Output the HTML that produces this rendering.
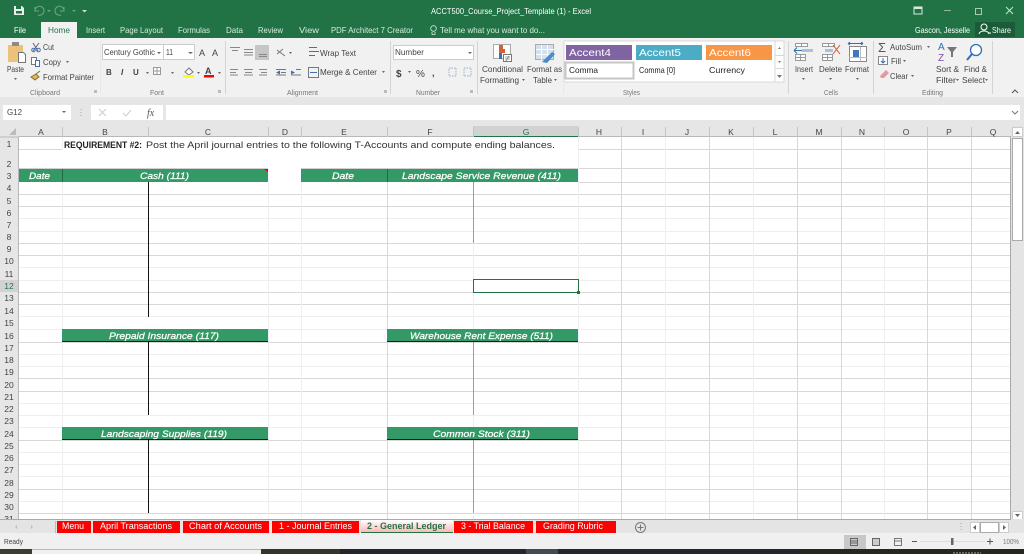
<!DOCTYPE html>
<html><head><meta charset="utf-8"><style>
html,body{margin:0;padding:0;background:#fff;width:1024px;height:554px;overflow:hidden}
svg{display:block;filter:blur(.35px)}
text{font-family:"Liberation Sans",sans-serif;font-size:8.5px;fill:#444}
.g{fill:#777;font-size:7.5px}
.w{fill:#fff}
.lt{fill:#d8eadf}
.h{fill:#fff;font-style:italic;font-size:9.5px;stroke:#fff;stroke-width:.25px}
.r{fill:#444;font-size:8.5px;text-anchor:middle}
.c{fill:#444;font-size:8.5px;text-anchor:middle}
.tab{fill:#fff;font-size:9px}
</style></head><body>
<svg width="1024" height="554" viewBox="0 0 1024 554" xmlns="http://www.w3.org/2000/svg">
<defs><linearGradient id="gl" x1="0" y1="0" x2="0" y2="1"><stop offset="0" stop-color="#fff"/><stop offset="1" stop-color="#ffb0b0"/></linearGradient></defs>
<!-- title / tabs -->
<rect width="1024" height="38" fill="#217346"/>
<path d="M14 6h8l2 2v7h-10z" fill="#e8f0ea"/><rect x="16" y="6" width="5" height="3" fill="#217346"/><rect x="16" y="11" width="6" height="2.500" fill="#217346"/>
<path d="M35 7v4h4M35 11a4.500 4.500 0 1 1 3 4" stroke="#6fa487" fill="none"/>
<path d="M64 7v4h-4M64 11a4.500 4.500 0 1 0-3 4" stroke="#6fa487" fill="none"/>
<path d="M47 10l2 2 2-2zM72 10l2 2 2-2z" fill="#6fa487"/>
<path d="M82 10h5l-2.500 2.500z" fill="#cfe0d6"/>
<text class="w" x="431" y="14" textLength="160" lengthAdjust="spacingAndGlyphs">ACCT500_Course_Project_Template (1) - Excel</text>
<rect x="41" y="22" width="36" height="17" fill="#f1f1f1"/>
<text class="w" x="14" y="33" textLength="12" lengthAdjust="spacingAndGlyphs">File</text>
<text x="48" y="33" textLength="22" lengthAdjust="spacingAndGlyphs" style="fill:#217346">Home</text>
<text class="lt" x="86" y="33" textLength="19" lengthAdjust="spacingAndGlyphs">Insert</text>
<text class="lt" x="120" y="33" textLength="43" lengthAdjust="spacingAndGlyphs">Page Layout</text>
<text class="lt" x="178" y="33" textLength="32" lengthAdjust="spacingAndGlyphs">Formulas</text>
<text class="lt" x="226" y="33" textLength="17" lengthAdjust="spacingAndGlyphs">Data</text>
<text class="lt" x="258" y="33" textLength="25" lengthAdjust="spacingAndGlyphs">Review</text>
<text class="lt" x="299" y="33" textLength="20" lengthAdjust="spacingAndGlyphs">View</text>
<text class="lt" x="331" y="33" textLength="82" lengthAdjust="spacingAndGlyphs">PDF Architect 7 Creator</text>
<circle cx="433.500" cy="28.500" r="2.800" stroke="#d8eadf" fill="none" stroke-width=".8"/><path d="M432 32v2.500h3V32" stroke="#d8eadf" fill="none" stroke-width=".8"/>
<text class="lt" x="440" y="33" textLength="105" lengthAdjust="spacingAndGlyphs">Tell me what you want to do...</text>
<text class="w" x="915" y="33" textLength="55" lengthAdjust="spacingAndGlyphs">Gascon, Jesselle</text>
<rect x="975" y="22" width="40" height="15" fill="#1a5c38"/>
<circle cx="984" cy="27" r="3" stroke="#fff" fill="none"/><path d="M979 34c1-4 9-4 10 0M988 33h3" stroke="#fff" fill="none"/>
<text class="w" x="992" y="33" textLength="19" lengthAdjust="spacingAndGlyphs">Share</text>
<rect x="914" y="7" width="8" height="7" stroke="#dbe8df" fill="none"/><rect x="914" y="7" width="8" height="2" fill="#dbe8df"/>
<path d="M944 10.500h7" stroke="#8fb7a0"/>
<rect x="975.500" y="8.500" width="6" height="6" stroke="#a9c8b5" fill="none"/>
<path d="M1006 7l7 7M1013 7l-7 7" stroke="#cfe0d6"/>
<!-- ribbon -->
<rect y="38" width="1024" height="59" fill="#f1f1f1"/>
<rect y="97" width="1024" height="29" fill="#e6e6e6"/>
<path d="M225.500 41v53M390.500 41v53M477.500 41v53M788.500 41v53M873.500 41v53M992.500 41v53" stroke="#d4d4d4"/>
<path d="M100.500 41v53M563.500 84v10" stroke="#e8e8e8"/>
<!-- clipboard -->
<rect x="8" y="45" width="15" height="17" fill="#ecc27a"/><rect x="12" y="42" width="7" height="4" fill="#8a8a8a"/>
<path d="M18.500 52.500h5l2 2v8h-7z" fill="#fff" stroke="#777"/>
<text x="7" y="72" textLength="17" lengthAdjust="spacingAndGlyphs">Paste</text>
<path d="M14 78h3l-1.500 2z" fill="#666"/>
<path d="M33 43l5 8M39 43l-6 8" stroke="#667" /><circle cx="33.500" cy="50" r="1.800" stroke="#3f6fb5" fill="none"/><circle cx="38.500" cy="50" r="1.800" stroke="#3f6fb5" fill="none"/>
<text x="43" y="50" textLength="11" lengthAdjust="spacingAndGlyphs">Cut</text>
<rect x="31.500" y="57.500" width="5" height="7" fill="#fff" stroke="#777"/><rect x="35.500" y="60.500" width="4" height="6" fill="#fff" stroke="#3f6fb5"/>
<text x="43" y="65" textLength="18" lengthAdjust="spacingAndGlyphs">Copy</text><path d="M66 61h3l-1.500 2z" fill="#666"/>
<path d="M31 77l5-3 3 3-4 3zM36 74l4-3" stroke="#8a6d2b" fill="#e3b560"/>
<text x="43" y="80" textLength="51" lengthAdjust="spacingAndGlyphs">Format Painter</text>
<text class="g" x="30" y="95" textLength="30" lengthAdjust="spacingAndGlyphs">Clipboard</text>
<rect x="94" y="90" width="3" height="3" fill="#bbb"/>
<!-- font -->
<rect x="102.500" y="44.500" width="61" height="15" fill="#fff" stroke="#ccc"/><rect x="163.500" y="44.500" width="31" height="15" fill="#fff" stroke="#ccc"/>
<text x="104" y="55" textLength="51" lengthAdjust="spacingAndGlyphs">Century Gothic</text><path d="M157 52h4l-2 2z" fill="#666"/>
<text x="166" y="55" textLength="7" lengthAdjust="spacingAndGlyphs">11</text><path d="M188 52h5l-2.500 2z" fill="#666"/>
<text x="199" y="56" style="font-size:9px">A</text><text x="212" y="56" style="font-size:9px">A</text>
<text x="106" y="75" style="font-weight:bold;font-size:8px">B</text><text x="121" y="75" style="font-style:italic;font-weight:bold;font-size:8px">I</text><text x="133" y="75" style="font-weight:bold;font-size:8px">U</text>
<path d="M146 72h3l-1.500 2z" fill="#666"/>
<path d="M153.500 67.500h7v7h-7zM157 67.500v7M153.500 71h7" stroke="#999" fill="#fff"/>
<path d="M171 72h3l-1.500 2z" fill="#666"/>
<path d="M185 72l4-4 4 4-4 3z" fill="#fff" stroke="#777"/><rect x="183" y="75" width="11" height="2.500" fill="#ff0"/>
<path d="M197 72h3l-1.500 2z" fill="#666"/>
<text x="205" y="74" style="font-size:9px;font-weight:bold">A</text><rect x="204" y="75" width="10" height="2.500" fill="#f00"/>
<path d="M218 72h3l-1.500 2z" fill="#666"/>
<text class="g" x="150" y="95" textLength="14" lengthAdjust="spacingAndGlyphs">Font</text>
<rect x="218" y="90" width="3" height="3" fill="#bbb"/>
<!-- alignment -->
<rect x="255" y="45" width="14" height="15" fill="#c6c6c6"/>
<path d="M230 47.500h10M232 50.500h6M244 49.500h9M244 52.500h9M244 55h9M259 54.500h8M259 56.500h8" stroke="#888"/>
<path d="M230 69.500h8M230 72.500h6M230 75h8M244 69.500h9M245 72.500h7M244 75h9M259 69.500h8M261 72.500h6M259 75h8" stroke="#888"/>
<path d="M277 50l8 6M277 54l6-5" stroke="#777" fill="none"/><path d="M289 52h3l-1.500 2z" fill="#666"/>
<path d="M276 69.500h10M276 75h10M281 72.500h5M296 69.500h5M291 75h10" stroke="#777"/><path d="M276 72.500l4-2v4zM295 72.500l-4-2v4z" fill="#3f6fb5"/>
<path d="M309 47.500h8M309 51.500h10M309 55.500h6" stroke="#3f6fb5"/>
<rect x="308.500" y="67.500" width="10" height="10" fill="none" stroke="#777"/><path d="M310 72.500h7" stroke="#3f6fb5"/>
<text x="320" y="56" textLength="36" lengthAdjust="spacingAndGlyphs">Wrap Text</text>
<text x="320" y="75" textLength="57" lengthAdjust="spacingAndGlyphs">Merge &amp; Center</text><path d="M382 71h3l-1.500 2z" fill="#666"/>
<text class="g" x="287" y="95" textLength="31" lengthAdjust="spacingAndGlyphs">Alignment</text>
<rect x="384" y="90" width="3" height="3" fill="#bbb"/>
<!-- number -->
<rect x="393.500" y="45.500" width="80" height="14" fill="#fff" stroke="#ccc"/>
<text x="395" y="55" textLength="29" lengthAdjust="spacingAndGlyphs">Number</text><path d="M468 52h4l-2 2z" fill="#666"/>
<text x="396" y="77" style="font-size:10px;font-weight:bold" fill="#444">$</text><path d="M408 71h3l-1.500 2z" fill="#666"/>
<text x="416" y="77" style="font-size:10px">%</text><text x="432" y="76" style="font-size:9px;font-weight:bold">,</text>
<path d="M449 68h7v8h-7z" fill="none" stroke="#9db0c5" stroke-dasharray="1.500 1"/><path d="M464 68h7v8h-7z" fill="none" stroke="#9db0c5" stroke-dasharray="1.500 1"/>
<text class="g" x="416" y="95" textLength="24" lengthAdjust="spacingAndGlyphs">Number</text>
<rect x="470" y="90" width="3" height="3" fill="#bbb"/>
<!-- cond format -->
<rect x="493.500" y="44.500" width="17" height="14" fill="#fff" stroke="#aaa"/>
<rect x="499" y="45" width="4" height="4" fill="#d2603a"/><rect x="499" y="49" width="6" height="4" fill="#d2603a"/><rect x="499" y="53" width="3" height="6" fill="#3f6fb5"/>
<rect x="503.500" y="54.500" width="8" height="7" fill="#fff" stroke="#777"/><path d="M505 57h5M505 59h5M509 56l-3 5" stroke="#555" stroke-width=".6"/>
<text x="482" y="72" textLength="41" lengthAdjust="spacingAndGlyphs">Conditional</text>
<text x="480" y="83" textLength="39" lengthAdjust="spacingAndGlyphs">Formatting</text><path d="M522 79h3l-1.500 2z" fill="#666"/>
<rect x="535.500" y="44.500" width="18" height="15" fill="#d3e0ef" stroke="#aaa"/><path d="M541.500 45v15M547.500 45v15M536 49.500h18M536 54.500h18" stroke="#fff"/>
<path d="M542 62l10-10 3 2-8 9z" fill="#4e8ac8"/>
<text x="527" y="72" textLength="35" lengthAdjust="spacingAndGlyphs">Format as</text>
<text x="533" y="83" textLength="19" lengthAdjust="spacingAndGlyphs">Table</text><path d="M554 79h3l-1.500 2z" fill="#666"/>
<!-- styles -->
<rect x="564" y="41" width="211" height="41" fill="#fff" stroke="#d8d8d8"/>
<rect x="566" y="45" width="66" height="15" fill="#8064a2"/>
<rect x="636" y="45" width="66" height="15" fill="#4bacc6"/>
<rect x="706" y="45" width="66" height="15" fill="#f79646"/>
<rect x="565.500" y="62.500" width="68" height="16" fill="#fff" stroke="#c6c6c6" stroke-width="2"/>
<text class="w" x="569" y="56" textLength="42" lengthAdjust="spacingAndGlyphs" style="font-size:10px">Accent4</text>
<text class="w" x="639" y="56" textLength="42" lengthAdjust="spacingAndGlyphs" style="font-size:10px">Accent5</text>
<text class="w" x="709" y="56" textLength="42" lengthAdjust="spacingAndGlyphs" style="font-size:10px">Accent6</text>
<text x="569" y="73" textLength="29" lengthAdjust="spacingAndGlyphs" style="fill:#222">Comma</text>
<text x="639" y="73" textLength="36" lengthAdjust="spacingAndGlyphs" style="fill:#222">Comma [0]</text>
<text x="709" y="73" textLength="36" lengthAdjust="spacingAndGlyphs" style="fill:#222">Currency</text>
<rect x="775" y="41" width="9" height="41" fill="#fff" stroke="#d8d8d8"/><path d="M775 55.500h9M775 68.500h9" stroke="#d8d8d8"/>
<path d="M778 49h3l-1.500-2zM778 61h3l-1.500 2zM777 75h5l-2.500 3z" fill="#777"/>
<text class="g" x="623" y="95" textLength="17" lengthAdjust="spacingAndGlyphs">Styles</text>
<!-- cells -->
<path d="M795.500 43.500h12v3h-12zM801.500 43.500v3M795.500 54.500h10v6h-10zM800.500 54.500v6M795.500 57.500h10" stroke="#999" fill="#fff"/>
<rect x="802" y="49" width="11" height="3" fill="#a9c2dc"/><path d="M794 50.500h8M794 50.500l3-3M794 50.500l3 3" stroke="#2f6fb8" fill="none"/>
<text x="795" y="72" textLength="18" lengthAdjust="spacingAndGlyphs">Insert</text><path d="M802 78h3l-1.500 2z" fill="#666"/>
<path d="M822.500 43.500h12v3h-12zM828.500 43.500v3M822.500 54.500h10v6h-10zM827.500 54.500v6M822.500 57.500h10" stroke="#999" fill="#fff"/>
<rect x="825" y="49" width="8" height="3" fill="#a9c2dc"/><path d="M833 45l7 9M840 45l-7 9" stroke="#d9532c" fill="none"/>
<text x="819" y="72" textLength="23" lengthAdjust="spacingAndGlyphs">Delete</text><path d="M829 78h3l-1.500 2z" fill="#666"/>
<path d="M848 43.500h15M848 43.500l2-1.500M848 43.500l2 1.500M863 43.500l-2-1.500M863 43.500l-2 1.500" stroke="#2f6fb8" fill="none"/>
<rect x="849.500" y="46.500" width="17" height="15" fill="#fff" stroke="#888"/><rect x="853" y="50" width="6" height="7" fill="#3f78b8"/><path d="M849 57.500h18M860.500 47v14" stroke="#bbb"/>
<text x="845" y="72" textLength="24" lengthAdjust="spacingAndGlyphs">Format</text><path d="M856 78h3l-1.500 2z" fill="#666"/>
<text class="g" x="824" y="95" textLength="14" lengthAdjust="spacingAndGlyphs">Cells</text>
<!-- editing -->
<text x="878" y="52" style="font-size:13px;fill:#555">Σ</text>
<text x="890" y="50" textLength="32" lengthAdjust="spacingAndGlyphs">AutoSum</text><path d="M927 46h3l-1.500 2z" fill="#666"/>
<rect x="878.500" y="56.500" width="9" height="8" fill="#fff" stroke="#888"/><path d="M883 58v5M881 61l2 2 2-2" stroke="#2f6fb8" fill="none"/>
<text x="891" y="64" textLength="10" lengthAdjust="spacingAndGlyphs">Fill</text><path d="M903 60h3l-1.500 2z" fill="#666"/>
<path d="M880 76l6-6 3 3-5 5h-3z" fill="#e89aa0"/>
<text x="890" y="79" textLength="18" lengthAdjust="spacingAndGlyphs">Clear</text><path d="M911 75h3l-1.500 2z" fill="#666"/>
<text x="938" y="50" style="font-size:10px;fill:#2f6fb8">A</text><text x="938" y="61" style="font-size:10px;fill:#7b4fa8">Z</text>
<path d="M947 47h10l-4 5v5h-2v-5z" fill="#777"/>
<text x="936" y="72" textLength="23" lengthAdjust="spacingAndGlyphs">Sort &amp;</text>
<text x="936" y="83" textLength="20" lengthAdjust="spacingAndGlyphs">Filter</text><path d="M956 79h3l-1.500 2z" fill="#666"/>
<circle cx="976" cy="50" r="5.500" fill="#fff" stroke="#2f6fb8" stroke-width="1.300"/><path d="M972 54l-5 6" stroke="#2f6fb8" stroke-width="2"/>
<text x="964" y="72" textLength="23" lengthAdjust="spacingAndGlyphs">Find &amp;</text>
<text x="962" y="83" textLength="23" lengthAdjust="spacingAndGlyphs">Select</text><path d="M985 79h3l-1.500 2z" fill="#666"/>
<text class="g" x="922" y="95" textLength="21" lengthAdjust="spacingAndGlyphs">Editing</text>
<path d="M1012 93l3-3 3 3" stroke="#555" fill="none"/>
<!-- formula bar -->
<rect x="3" y="105" width="68" height="15" fill="#fff"/><text x="7" y="115" textLength="15" lengthAdjust="spacingAndGlyphs">G12</text><path d="M62 111h4l-2 2z" fill="#666"/>
<path d="M81 109v1M81 112v1M81 115v1" stroke="#aaa"/>
<rect x="91" y="105" width="72" height="15" fill="#fff"/><rect x="166" y="105" width="854" height="15" fill="#fff"/>
<path d="M99 109l7 7M106 109l-7 7" stroke="#ccc"/><path d="M123 113l3 3 5-6" stroke="#ccc" fill="none"/>
<text x="147" y="116" style="font-family:'Liberation Serif',serif;font-style:italic;font-size:10px;fill:#555">fx</text>
<path d="M1012 111l3 3 3-3" stroke="#777" fill="none"/>
<!-- sheet -->
<rect x="0" y="126" width="1024" height="393" fill="#fff"/>
<rect x="0" y="126" width="1024" height="11" fill="#e6e6e6"/>
<rect x="0" y="137" width="19" height="382" fill="#e6e6e6"/>
<rect x="473" y="126" width="105" height="11" fill="#d2d2d2"/><path d="M473 136.500h105" stroke="#217346"/>
<rect x="0" y="280" width="19" height="12" fill="#d2d2d2"/><path d="M18.500 280v12" stroke="#217346"/>
<path d="M16 128v7h-7z" fill="#bbb"/>
<path d="M19 136.500h454M578 136.500h433M18.500 137v382" stroke="#b8b8b8" fill="none"/>
<path d="M62.500 127v10M148.500 127v10M268.500 127v10M301.500 127v10M387.500 127v10M473.500 127v10M578.500 127v10M621.500 127v10M665.500 127v10M709.500 127v10M753.500 127v10M797.500 127v10M841.500 127v10M884.500 127v10M927.500 127v10M971.500 127v10" stroke="#c4c4c4"/>
<!-- horizontal grid -->
<g stroke="#d8d8d8">
<path d="M19 194.500h992M19 206.500h992M19 243.500h992M19 255.500h992M19 292.500h992M19 304.500h992M19 342.500h992M19 378.500h992M19 391.500h992M19 440.500h992M19 489.500h992M19 513.500h992"/>
<path d="M19 149.500h43M578 149.500h433M578 168.500h433M578 182.500h433"/>
</g>
<g stroke="#efefef">
<path d="M19 218.500h992M19 231.500h992M19 267.500h992M19 280.500h992M19 316.500h992M19 329.500h992M19 354.500h992M19 366.500h992M19 403.500h992M19 415.500h992M19 427.500h992M19 452.500h992M19 464.500h992M19 476.500h992M19 501.500h992"/>
<path d="M19 169.500h43"/>
</g>
<g stroke="#efefef"><path d="M62.500 182v337M268.500 182v337M301.500 182v337M473.500 182v337M578.500 137v382M665.500 137v382M753.500 137v382M884.500 137v382M62.500 137v12"/></g>
<g stroke="#d8d8d8"><path d="M387.500 182v337M621.500 137v382M709.500 137v382M797.500 137v382M841.500 137v382M927.500 137v382M971.500 137v382"/></g>
<path d="M1010.500 137v382" stroke="#a8a8a8"/>
<!-- row 1 text -->
<text x="64" y="148" textLength="78" lengthAdjust="spacingAndGlyphs" style="font-weight:bold;font-size:9px;fill:#222">REQUIREMENT #2:</text>
<text x="146" y="148" textLength="409" lengthAdjust="spacingAndGlyphs" style="font-size:9.500px;fill:#333">Post the April journal entries to the following T-Accounts and compute ending balances.</text>
<!-- green headers -->
<g fill="#339966">
<rect x="19" y="169" width="249" height="13"/><rect x="301" y="169" width="277" height="13"/>
<rect x="62" y="329" width="206" height="12.500"/><rect x="387" y="329" width="191" height="12.500"/>
<rect x="62" y="427" width="206" height="12.500"/><rect x="387" y="427" width="191" height="12.500"/>
</g>
<path d="M62.500 169v13M387.500 169v13" stroke="#1f6b44"/>
<path d="M19 168.500h249M301 168.500h277" stroke="#d0d0d0"/>
<path d="M62 341.500h206M387 341.500h191M62 439.500h206M387 439.500h191" stroke="#1a1a1a"/>
<path d="M264 169h4v3z" fill="#e00"/>
<text class="h" x="29" y="179" textLength="21" lengthAdjust="spacingAndGlyphs">Date</text>
<text class="h" x="140" y="179" textLength="49" lengthAdjust="spacingAndGlyphs">Cash (111)</text>
<text class="h" x="332" y="179" textLength="22" lengthAdjust="spacingAndGlyphs">Date</text>
<text class="h" x="402" y="179" textLength="159" lengthAdjust="spacingAndGlyphs">Landscape Service Revenue (411)</text>
<text class="h" x="109" y="339" textLength="110" lengthAdjust="spacingAndGlyphs">Prepaid Insurance (117)</text>
<text class="h" x="410" y="339" textLength="143" lengthAdjust="spacingAndGlyphs">Warehouse Rent Expense (511)</text>
<text class="h" x="101" y="437" textLength="126" lengthAdjust="spacingAndGlyphs">Landscaping Supplies (119)</text>
<text class="h" x="433" y="437" textLength="97" lengthAdjust="spacingAndGlyphs">Common Stock (311)</text>
<!-- T lines -->
<path d="M148.500 182v135M148.500 342v73M148.500 440v73" stroke="#111"/>
<path d="M473.500 182v61M473.500 342v73M473.500 440v73" stroke="#9c9c9c"/>
<!-- selection -->
<rect x="473.500" y="279.500" width="105" height="13" fill="#fff" stroke="#217346"/><rect x="577" y="291" width="3" height="3" fill="#217346"/>
<!-- col letters -->
<text class="c" x="41" y="135">A</text><text class="c" x="105" y="135">B</text><text class="c" x="208" y="135">C</text><text class="c" x="285" y="135">D</text><text class="c" x="344" y="135">E</text><text class="c" x="430" y="135">F</text><text class="c" x="526" y="135" style="fill:#217346">G</text><text class="c" x="599" y="135">H</text><text class="c" x="643" y="135">I</text><text class="c" x="687" y="135">J</text><text class="c" x="731" y="135">K</text><text class="c" x="775" y="135">L</text><text class="c" x="819" y="135">M</text><text class="c" x="862" y="135">N</text><text class="c" x="906" y="135">O</text><text class="c" x="949" y="135">P</text><text class="c" x="993" y="135">Q</text>
<!-- row numbers -->
<text class="r" x="9" y="147">1</text><text class="r" x="9" y="167">2</text><text class="r" x="9" y="179">3</text><text class="r" x="9" y="191">4</text><text class="r" x="9" y="204">5</text><text class="r" x="9" y="216">6</text><text class="r" x="9" y="228">7</text><text class="r" x="9" y="240">8</text><text class="r" x="9" y="252">9</text><text class="r" x="9" y="264">10</text><text class="r" x="9" y="277">11</text><text class="r" x="9" y="289" style="fill:#217346">12</text><text class="r" x="9" y="301">13</text><text class="r" x="9" y="314">14</text><text class="r" x="9" y="326">15</text><text class="r" x="9" y="339">16</text><text class="r" x="9" y="351">17</text><text class="r" x="9" y="363">18</text><text class="r" x="9" y="375">19</text><text class="r" x="9" y="388">20</text><text class="r" x="9" y="400">21</text><text class="r" x="9" y="412">22</text><text class="r" x="9" y="424">23</text><text class="r" x="9" y="437">24</text><text class="r" x="9" y="449">25</text><text class="r" x="9" y="461">26</text><text class="r" x="9" y="473">27</text><text class="r" x="9" y="486">28</text><text class="r" x="9" y="498">29</text><text class="r" x="9" y="510">30</text><text class="r" x="9" y="522">31</text>
<path d="M0 137h19" stroke="#b8b8b8"/>
<!-- v scrollbar -->
<rect x="1011" y="126" width="13" height="393" fill="#e4e4e4"/>
<rect x="1012.500" y="127.500" width="10" height="9" fill="#fff" stroke="#ccc"/><path d="M1015 134h5l-2.500-3z" fill="#666"/>
<rect x="1012.500" y="138.500" width="10" height="102" fill="#fff" stroke="#aaa"/>
<rect x="1012.500" y="511.500" width="10" height="8" fill="#fff" stroke="#ccc"/><path d="M1015 514h5l-2.500 3z" fill="#666"/>
<!-- tab bar -->
<rect y="519" width="1024" height="14" fill="#e4e4e4"/>
<path d="M0 519.500h1011" stroke="#a8a8a8"/>
<path d="M15 527l2-2v4zM33 527l-2-2v4z" fill="#bbb"/>
<path d="M55.500 521v12" stroke="#bbb"/>
<g fill="#f00">
<rect x="57" y="521" width="34" height="12"/><rect x="93" y="521" width="87" height="12"/><rect x="183" y="521" width="86" height="12"/><rect x="272" y="521" width="87" height="12"/><rect x="454" y="521" width="79" height="12"/><rect x="536" y="521" width="80" height="12"/>
</g>
<rect x="361" y="520" width="92" height="13" fill="url(#gl)"/><path d="M361 532.500h92" stroke="#217346"/>
<text class="tab" x="62" y="529" textLength="22" lengthAdjust="spacingAndGlyphs">Menu</text>
<text class="tab" x="100" y="529" textLength="72" lengthAdjust="spacingAndGlyphs">April Transactions</text>
<text class="tab" x="189" y="529" textLength="73" lengthAdjust="spacingAndGlyphs">Chart of Accounts</text>
<text class="tab" x="279" y="529" textLength="73" lengthAdjust="spacingAndGlyphs">1 - Journal Entries</text>
<text x="367" y="529" textLength="79" lengthAdjust="spacingAndGlyphs" style="font-weight:bold;font-size:9px;fill:#217346">2 - General Ledger</text>
<text class="tab" x="461" y="529" textLength="64" lengthAdjust="spacingAndGlyphs">3 - Trial Balance</text>
<text class="tab" x="543" y="529" textLength="60" lengthAdjust="spacingAndGlyphs">Grading Rubric</text>
<circle cx="640.500" cy="527.500" r="5" fill="none" stroke="#777"/><path d="M637.500 527.500h6M640.500 524.500v6" stroke="#777"/>
<path d="M961 523v1M961 526v1M961 529v1" stroke="#aaa"/>
<rect x="970.500" y="522.500" width="9" height="10" fill="#fff" stroke="#ccc"/><rect x="980.500" y="522.500" width="18" height="10" fill="#fff" stroke="#aaa"/><rect x="999.500" y="522.500" width="9" height="10" fill="#fff" stroke="#ccc"/>
<path d="M973 527.500l3-2.500v5zM1006 527.500l-3-2.500v5z" fill="#666"/>
<!-- status -->
<rect y="533" width="1024" height="16" fill="#f0f0f0"/>
<text x="4" y="544" textLength="19" lengthAdjust="spacingAndGlyphs" style="font-size:7.500px">Ready</text>
<rect x="844" y="535" width="22" height="14" fill="#c8c8c8"/>
<path d="M850.500 538.500h7v7h-7zM850 541h8M850 543h8" fill="none" stroke="#666"/>
<rect x="872.500" y="538.500" width="7" height="7" fill="#ccc" stroke="#666"/>
<path d="M894.500 538.500h7v7h-7zM894 541h8" fill="none" stroke="#777"/>
<path d="M912 541.500h5" stroke="#555"/>
<path d="M920 541.500h65" stroke="#ddd"/><rect x="951" y="538" width="2.500" height="7" fill="#666"/>
<path d="M987 541.500h6M990 538.500v6" stroke="#555"/>
<text x="1003" y="544" textLength="16" lengthAdjust="spacingAndGlyphs" style="font-size:7px;fill:#777">100%</text>
<!-- taskbar strip -->
<rect y="549" width="1024" height="5" fill="#23262b"/>
<rect x="0" y="549" width="32" height="5" fill="#3a3d30"/>
<rect x="32" y="549" width="229" height="5" fill="#f0f0f0"/><path d="M32 549.500h229" stroke="#bbb"/>
<rect x="261" y="549" width="79" height="5" fill="#33352c"/>
<rect x="526" y="549" width="32" height="5" fill="#454a52"/>
<rect x="800" y="549" width="224" height="5" fill="#26261e"/>
<path d="M953 553h28" stroke="#aaa" stroke-dasharray="2 1"/>
</svg>
</body></html>
